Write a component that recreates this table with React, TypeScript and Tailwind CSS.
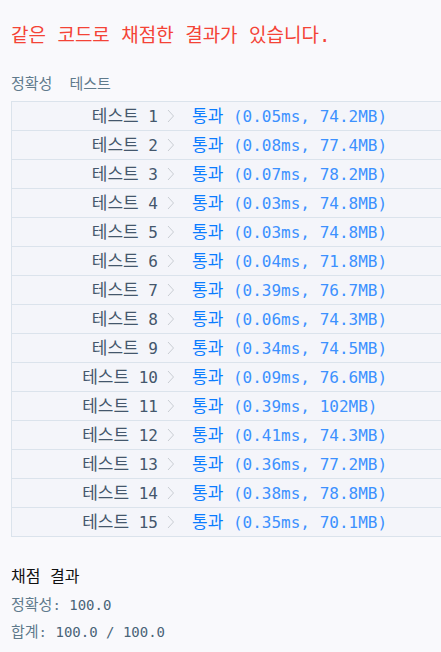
const mono = "font-['DejaVu_Sans_Mono','Noto_Sans_CJK_KR',monospace]";

const results: [string, string][] = [
  ["0.05ms", "74.2MB"],
  ["0.08ms", "77.4MB"],
  ["0.07ms", "78.2MB"],
  ["0.03ms", "74.8MB"],
  ["0.03ms", "74.8MB"],
  ["0.04ms", "71.8MB"],
  ["0.39ms", "76.7MB"],
  ["0.06ms", "74.3MB"],
  ["0.34ms", "74.5MB"],
  ["0.09ms", "76.6MB"],
  ["0.39ms", "102MB"],
  ["0.41ms", "74.3MB"],
  ["0.36ms", "77.2MB"],
  ["0.38ms", "78.8MB"],
  ["0.35ms", "70.1MB"],
];

function Chevron() {
  return (
    <svg width="8" height="14" viewBox="0 0 8 14" className="block">
      <polyline points="1,1 6.5,7 1,13" fill="none" stroke="#c9cdd3" strokeWidth="1" />
    </svg>
  );
}

export default function App() {
  return (
    <div className={`min-h-[652px] bg-[#f9f9fc] pl-[11px] pt-[21px] ${mono}`}>
      <h1 className="text-[19px] leading-[28px] text-[#f44336]">같은 코드로 채점한 결과가 있습니다.</h1>

      <div className="mt-[25px] flex gap-[17px] text-[15px] leading-[20px] text-[#5f7a8c]">
        <span>정확성</span>
        <span>테스트</span>
      </div>

      <div className="mt-[7px] border-t border-l border-[#dbe3ec]">
        {results.map(([time, mem], i) => (
          <div
            key={i}
            className="flex h-[29px] items-center border-b border-[#dbe3ec] bg-[#f4f5fa] text-[16px] leading-[20px]"
          >
            <div className="w-[146px] text-right text-[#44576c]">
              <span className="text-[17px]">테스트</span> {i + 1}
            </div>
            <div className="ml-[9px] w-[8px]">
              <Chevron />
            </div>
            <div className="ml-[17px] text-[#0a7cff]">
              <span className="text-[17px]">통과</span>{" "}
              <span className="text-[#3c91ff]">({time}, {mem})</span>
            </div>
          </div>
        ))}
      </div>

      <div className="mt-[27px] text-[16px] leading-[26px] text-[#111]">채점 결과</div>
      <div className="mt-[2px] text-[14px] leading-[26px] text-[#5f7a8c]">
        <span className="text-[15px]">정확성</span>: <span className="text-[#4a6478]">100.0</span>
      </div>
      <div className="mt-[1px] text-[14px] leading-[26px] text-[#5f7a8c]">
        <span className="text-[15px]">합계</span>: <span className="text-[#4a6478]">100.0 / 100.0</span>
      </div>
    </div>
  );
}
